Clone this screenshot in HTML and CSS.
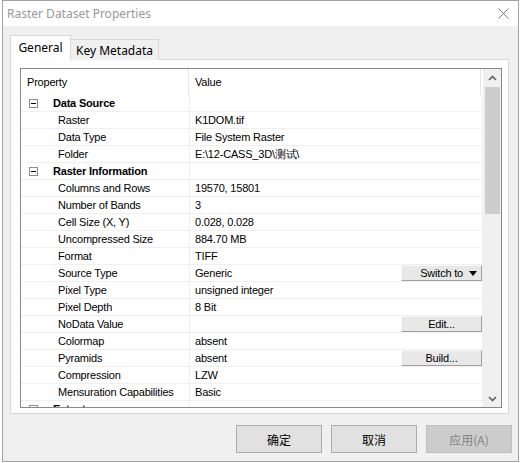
FILE: index.html
```html
<!DOCTYPE html>
<html>
<head>
<meta charset="utf-8">
<link rel="stylesheet" href="styles.css">
</head>
<body>
<div class="window">
  <div class="titlebar">
    <span class="title">Raster Dataset Properties</span>
    <svg class="close" width="11" height="11" viewBox="0 0 11 11"><path d="M0.5 0.5 L10.5 10.5 M10.5 0.5 L0.5 10.5" stroke="#7a7a7a" stroke-width="1" fill="none"/></svg>
  </div>
  <div class="client">
    <div class="tabs">
      <div class="tab active">General</div>
      <div class="tab">Key Metadata</div>
    </div>
    <div class="panel">
      <div class="grid">
        <div class="list">
          <div class="head"><div class="hc hprop">Property</div><div class="hc hval">Value</div></div>
          <div class="row group"><div class="c prop"><span class="box"></span>Data Source</div><div class="c val"></div></div>
          <div class="row"><div class="c prop">Raster</div><div class="c val">K1DOM.tif</div></div>
          <div class="row"><div class="c prop">Data Type</div><div class="c val">File System Raster</div></div>
          <div class="row"><div class="c prop">Folder</div><div class="c val">E:\12-CASS_3D\测试\</div></div>
          <div class="row group"><div class="c prop"><span class="box"></span>Raster Information</div><div class="c val"></div></div>
          <div class="row"><div class="c prop">Columns and Rows</div><div class="c val">19570, 15801</div></div>
          <div class="row"><div class="c prop">Number of Bands</div><div class="c val">3</div></div>
          <div class="row"><div class="c prop">Cell Size (X, Y)</div><div class="c val">0.028, 0.028</div></div>
          <div class="row"><div class="c prop">Uncompressed Size</div><div class="c val">884.70 MB</div></div>
          <div class="row"><div class="c prop">Format</div><div class="c val">TIFF</div></div>
          <div class="row"><div class="c prop">Source Type</div><div class="c val"><span class="vt">Generic</span><span class="cbtn switch">Switch to <svg width="8" height="5" viewBox="0 0 8 5"><path d="M0 0 H8 L4 5 Z" fill="#000"/></svg></span></div></div>
          <div class="row"><div class="c prop">Pixel Type</div><div class="c val">unsigned integer</div></div>
          <div class="row"><div class="c prop">Pixel Depth</div><div class="c val">8 Bit</div></div>
          <div class="row"><div class="c prop">NoData Value</div><div class="c val"><span class="vt"></span><span class="cbtn">Edit...</span></div></div>
          <div class="row"><div class="c prop">Colormap</div><div class="c val">absent</div></div>
          <div class="row"><div class="c prop">Pyramids</div><div class="c val"><span class="vt">absent</span><span class="cbtn">Build...</span></div></div>
          <div class="row"><div class="c prop">Compression</div><div class="c val">LZW</div></div>
          <div class="row"><div class="c prop">Mensuration Capabilities</div><div class="c val">Basic</div></div>
          <div class="row group"><div class="c prop"><span class="box"></span>Extent</div><div class="c val"></div></div>
        </div>
        <div class="scrollbar">
          <div class="sb-arrow"><svg width="9" height="6" viewBox="0 0 9 6"><path d="M1 5 L4.5 1.5 L8 5" stroke="#606060" stroke-width="1.6" fill="none"/></svg></div>
          <div class="sb-thumb"></div>
          <div class="sb-track"></div>
          <div class="sb-arrow"><svg width="9" height="6" viewBox="0 0 9 6"><path d="M1 1 L4.5 4.5 L8 1" stroke="#606060" stroke-width="1.6" fill="none"/></svg></div>
        </div>
      </div>
    </div>
    <div class="buttons">
      <div class="btn">确定</div>
      <div class="btn">取消</div>
      <div class="btn disabled">应用(A)</div>
    </div>
  </div>
</div>
<svg class="annot" width="521" height="463" viewBox="0 0 521 463">
  <polygon fill="#f2403c" points="259,208 274.2,208.8 273,205.5 297.2,194.7 296.8,193.3 271.2,200.9 270,197.6"/>
  <polygon fill="#f2403c" points="279,311 295.5,311.7 294,308 322.4,293.9 321.6,292.1 291.6,302.4 290.1,298.7"/>
</svg>
</body>
</html>
```
FILE: styles.css
```css
html, body {
  margin: 0;
  padding: 0;
}
body {
  background: #ffffff;
  width: 521px;
  height: 463px;
  overflow: hidden;
  position: relative;
  font-family: "Liberation Sans", Arial, sans-serif;
}
.window {
  margin-left: 2px;
  width: 517px;
  height: 462px;
  box-sizing: border-box;
  border: 1px solid #a3a3a3;
  display: flex;
  flex-direction: column;
}
.titlebar {
  height: 25px;
  background: #ffffff;
  display: flex;
  align-items: center;
  justify-content: space-between;
  padding-left: 4px;
  padding-right: 9px;
}
.title {
  font-family: "Noto Sans", sans-serif;
  font-size: 12px;
  color: #999999;
}
.client {
  flex: 1;
  background: #f0f0f0;
  padding: 9px 0 0 7px;
  display: flex;
  flex-direction: column;
}
.tabs {
  display: flex;
  align-items: flex-end;
  height: 25px;
  margin-bottom: -1px;
  position: relative;
  z-index: 2;
}
.tab {
  font-family: "Noto Sans", sans-serif;
  font-size: 12px;
  color: #000;
  box-sizing: border-box;
  height: 21px;
  width: 89px;
  border: 1px solid #d9d9d9;
  border-bottom: none;
  background: #f0f0f0;
  display: flex;
  align-items: center;
  justify-content: center;
  margin-left: -1px;
}
.tab.active {
  height: 25px;
  width: 61px;
  background: #ffffff;
  margin-left: 0;
  position: relative;
  z-index: 2;
  padding-bottom: 1px;
}
.panel {
  width: 499px;
  height: 355px;
  box-sizing: border-box;
  border: 1px solid #d9d9d9;
  background: #ffffff;
  padding: 8px 0 0 9px;
  position: relative;
  z-index: 1;
}
.grid {
  width: 482px;
  height: 340px;
  box-sizing: border-box;
  border: 1px solid #828790;
  display: flex;
  font-size: 11px;
  letter-spacing: -0.2px;
  color: #000;
}
.list {
  width: 462px;
  height: 338px;
  overflow: hidden;
}
.head {
  display: flex;
  height: 26px;
}
.hc {
  box-sizing: border-box;
  display: flex;
  align-items: center;
  padding-left: 6px;
  border-right: 1px solid #e5e5e5;
}
.hprop { width: 168px; }
.hval { width: 292px; }
.row {
  display: flex;
  height: 17px;
  box-sizing: border-box;
  border-bottom: 1px solid #f0f0f0;
}
.c {
  box-sizing: border-box;
  height: 16px;
  display: flex;
  align-items: center;
  border-right: 1px solid #f0f0f0;
  white-space: nowrap;
}
.prop {
  width: 169px;
  padding-left: 37px;
}
.val {
  width: 293px;
  padding-left: 5px;
}
.group .prop {
  padding-left: 8px;
  font-weight: bold;
}
.box {
  width: 9px;
  height: 9px;
  box-sizing: border-box;
  border: 1px solid #8c8c8c;
  margin-right: 15px;
  position: relative;
}
.box::after {
  content: "";
  position: absolute;
  left: 1px;
  top: 3px;
  width: 5px;
  height: 1px;
  background: #000;
}
.vt {
  flex: 1;
}
.cbtn {
  width: 81px;
  height: 16px;
  box-sizing: border-box;
  background: #e8e8e8;
  border-right: 1px solid #a0a0a0;
  border-bottom: 1px solid #a0a0a0;
  border-top: 1px solid #f8f8f8;
  border-left: 1px solid #f8f8f8;
  display: flex;
  align-items: center;
  justify-content: center;
  font-size: 11px;
  color: #000;
}
.cbtn.switch {
  justify-content: flex-end;
  padding-right: 4px;
  gap: 6px;
}
.scrollbar {
  width: 18px;
  height: 338px;
  background: #f0f0f0;
  display: flex;
  flex-direction: column;
}
.sb-arrow {
  height: 17px;
  display: flex;
  align-items: center;
  justify-content: center;
  padding-left: 1px;
}
.sb-thumb {
  height: 127px;
  margin: 1px 1px 0 2px;
  background: #cdcdcd;
}
.sb-track {
  flex: 1;
}
.buttons {
  display: flex;
  justify-content: flex-end;
  gap: 9px;
  margin-top: 11px;
  padding-right: 6px;
}
.btn {
  width: 86px;
  height: 28px;
  box-sizing: border-box;
  border: 1px solid #adadad;
  background: #e1e1e1;
  display: flex;
  align-items: center;
  justify-content: center;
  font-family: "Noto Sans CJK SC", "Noto Sans", sans-serif;
  font-size: 12px;
  color: #000;
}
.btn.disabled {
  background: #cccccc;
  border-color: #bfbfbf;
  color: #838383;
}
.annot {
  position: absolute;
  left: 0;
  top: 0;
  pointer-events: none;
}
```
